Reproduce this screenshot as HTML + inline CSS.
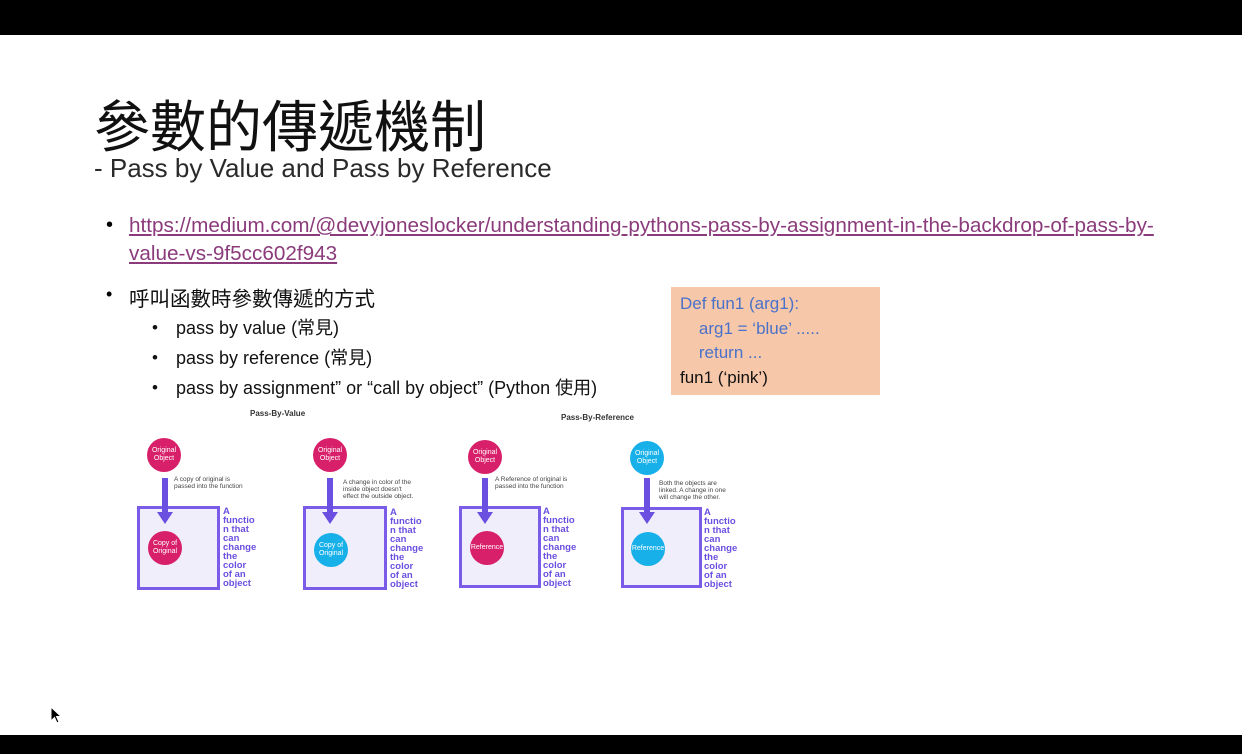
<!DOCTYPE html>
<html><head><meta charset="utf-8"><style>
*{margin:0;padding:0;box-sizing:border-box}
body{width:1242px;height:754px;background:#000;position:relative;overflow:hidden;font-family:"Liberation Sans","Noto Sans CJK TC",sans-serif}
.slide{position:absolute;left:0;top:35px;width:1242px;height:700px;background:#fff}
.a{position:absolute;white-space:nowrap}
.circ{position:absolute;border-radius:50%;color:#fff;font-size:7px;text-align:center;display:flex;align-items:center;justify-content:center;line-height:8px}
.pk{background:#d8206a}.cy{background:#18b0e8}
.box{position:absolute;border:3px solid #7b5ce8;background:#f1eefb}
.ft{position:absolute;color:#6b4fe0;font-size:9.5px;line-height:9px;font-weight:bold}
.cap{position:absolute;font-size:6.5px;line-height:7px;color:#444;white-space:nowrap}
.shaft{position:absolute;width:6px;background:#6b4fe0}
</style></head><body>
<div class="slide"></div>
<div class="a" style="left:94px;top:83px;font-size:56px;color:#111;font-family:'Noto Sans CJK TC',sans-serif;font-weight:400">參數的傳遞機制</div>
<div class="a" style="left:94px;top:153px;font-size:26px;color:#2a2a2a;font-family:'Liberation Sans',sans-serif">- Pass by Value and Pass by Reference</div>
<div class="a" style="left:106px;top:214px;font-size:20px">•</div>
<div class="a" style="left:129px;top:212px;font-size:20.7px;color:#8b3b7b;text-decoration:underline;line-height:28px">https://medium.com/@devyjoneslocker/understanding-pythons-pass-by-assignment-in-the-backdrop-of-pass-by-<br>value-vs-9f5cc602f943</div>
<div class="a" style="left:106px;top:284px;font-size:18px">•</div>
<div class="a" style="left:129px;top:282px;font-size:20.5px;color:#111">呼叫函數時參數傳遞的方式</div>
<div class="a" style="left:152px;top:313px;font-size:17px;line-height:30px;color:#111">•<br>•<br>•</div>
<div class="a" style="left:176px;top:313px;font-size:18px;line-height:30px;color:#111">pass by value (常見)<br>pass by reference (常見)<br>pass by assignment” or “call by object” (Python 使用)</div>
<div class="a" style="left:671px;top:287px;width:209px;height:108px;background:#f7c7aa"></div>
<div class="a" style="left:680px;top:292px;font-size:17px;line-height:24.5px;color:#4a72c8;font-family:'Liberation Sans',sans-serif">Def fun1 (arg1):<br>&nbsp;&nbsp;&nbsp;&nbsp;arg1 = ‘blue’ .....<br>&nbsp;&nbsp;&nbsp;&nbsp;return ...<br><span style="color:#111">fun1 (‘pink’)</span></div>

<div class="a" style="left:250px;top:409px;font-size:8px;font-weight:bold;color:#333">Pass-By-Value</div>
<div class="a" style="left:561px;top:413px;font-size:8px;font-weight:bold;color:#333">Pass-By-Reference</div>

<div class="box" style="left:137px;top:506px;width:83px;height:84px"></div>
<div class="shaft" style="left:162px;top:478px;height:42px"></div>
<div class="a" style="left:157px;top:512px;border-left:8px solid transparent;border-right:8px solid transparent;border-top:12px solid #6b4fe0"></div>
<div class="circ pk" style="left:147px;top:438px;width:34px;height:34px">Original<br>Object</div>
<div class="circ pk" style="left:148px;top:531px;width:34px;height:34px">Copy of<br>Original</div>
<div class="cap" style="left:174px;top:476px">A copy of original is<br>passed into the function</div>
<div class="ft" style="left:223px;top:507px">A<br>functio<br>n that<br>can<br>change<br>the<br>color<br>of an<br>object</div>
<div class="box" style="left:303px;top:506px;width:84px;height:84px"></div>
<div class="shaft" style="left:327px;top:478px;height:42px"></div>
<div class="a" style="left:322px;top:512px;border-left:8px solid transparent;border-right:8px solid transparent;border-top:12px solid #6b4fe0"></div>
<div class="circ pk" style="left:313px;top:438px;width:34px;height:34px">Original<br>Object</div>
<div class="circ cy" style="left:314px;top:533px;width:34px;height:34px">Copy of<br>Original</div>
<div class="cap" style="left:343px;top:479px">A change in color of the<br>inside object doesn't<br>effect the outside object.</div>
<div class="ft" style="left:390px;top:508px">A<br>functio<br>n that<br>can<br>change<br>the<br>color<br>of an<br>object</div>
<div class="box" style="left:459px;top:506px;width:82px;height:82px"></div>
<div class="shaft" style="left:482px;top:478px;height:42px"></div>
<div class="a" style="left:477px;top:512px;border-left:8px solid transparent;border-right:8px solid transparent;border-top:12px solid #6b4fe0"></div>
<div class="circ pk" style="left:468px;top:440px;width:34px;height:34px">Original<br>Object</div>
<div class="circ pk" style="left:470px;top:531px;width:34px;height:34px">Reference</div>
<div class="cap" style="left:495px;top:476px">A Reference of original is<br>passed into the function</div>
<div class="ft" style="left:543px;top:507px">A<br>functio<br>n that<br>can<br>change<br>the<br>color<br>of an<br>object</div>
<div class="box" style="left:621px;top:507px;width:81px;height:81px"></div>
<div class="shaft" style="left:644px;top:478px;height:42px"></div>
<div class="a" style="left:639px;top:512px;border-left:8px solid transparent;border-right:8px solid transparent;border-top:12px solid #6b4fe0"></div>
<div class="circ cy" style="left:630px;top:441px;width:34px;height:34px">Original<br>Object</div>
<div class="circ cy" style="left:631px;top:532px;width:34px;height:34px">Reference</div>
<div class="cap" style="left:659px;top:480px">Both the objects are<br>linked. A change in one<br>will change the other.</div>
<div class="ft" style="left:704px;top:508px">A<br>functio<br>n that<br>can<br>change<br>the<br>color<br>of an<br>object</div>

<svg class="a" style="left:50px;top:706px" width="12" height="18" viewBox="0 0 12 18"><path d="M1 1 L1 15 L4.5 11.5 L7 17 L9 16 L6.5 10.5 L11 10.5 Z" fill="#000" stroke="#fff" stroke-width="1"/></svg>
</body></html>
